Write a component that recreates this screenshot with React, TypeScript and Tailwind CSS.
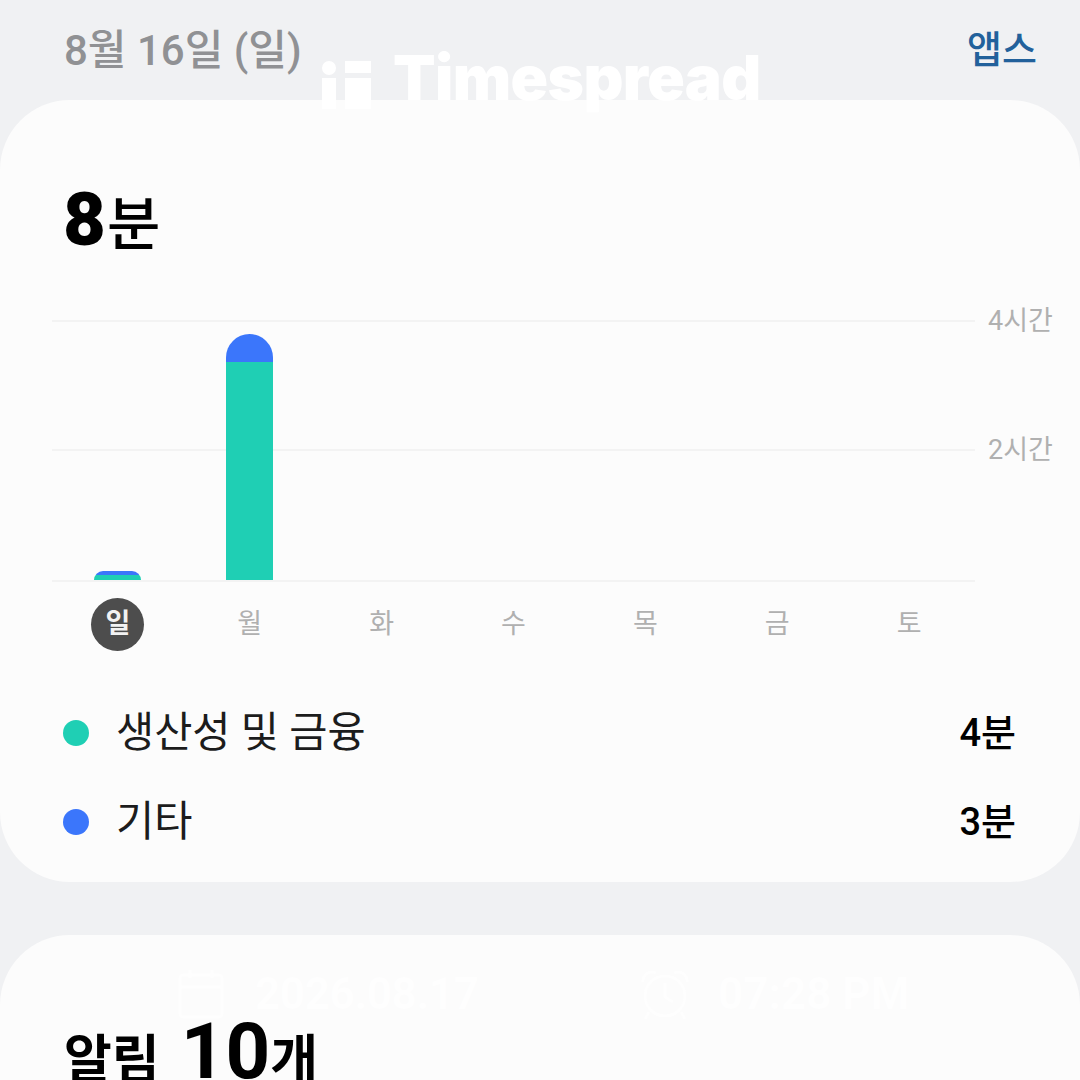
const days = ['일', '월', '화', '수', '목', '금', '토'];

const bars: Record<string, { green: number; blue: number; round: string }> = {
  일: { green: 5, blue: 4, round: 'rounded-t-[10px]' },
  월: { green: 218, blue: 28, round: 'rounded-t-[24px]' },
};

const usage = [
  { name: '생산성 및 금융', time: '4분', dot: 'bg-[#1fcfb4]' },
  { name: '기타', time: '3분', dot: 'bg-[#3b76fb]' },
];

const Watermark = () => (
  <div className="absolute left-[322px] top-[41px] flex items-center gap-[22px] text-white">
    <svg width="49" height="62" viewBox="0 0 49 62" fill="currentColor">
      <circle cx="7" cy="21" r="7" />
      <rect x="0" y="31" width="14" height="31" />
      <rect x="23" y="14" width="26" height="12" />
      <rect x="23" y="31" width="26" height="31" />
    </svg>
    <span className="whitespace-nowrap font-['Inter'] text-[62px] leading-[74px] font-black tracking-[-0.6px]">Timespread</span>
  </div>
);

const Stamp = () => (
  <div className="absolute left-[178px] top-[968px] flex items-center text-white opacity-70">
    <svg width="46" height="50" viewBox="0 0 46 50" fill="none" stroke="currentColor" strokeWidth="3">
      <rect x="2" y="6" width="42" height="42" rx="3" />
      <path d="M2 18h42M12 1v8M34 1v8" />
    </svg>
    <span className="ml-[31px] w-[385px] whitespace-nowrap font-['Roboto'] text-[44px] leading-[50px] font-bold tracking-[-0.4px]">2026.08.17</span>
    <svg width="50" height="52" viewBox="0 0 50 52" fill="none" stroke="currentColor" strokeWidth="3">
      <circle cx="25" cy="28" r="20" />
      <path d="M25 15v14l8 5M3 14a9 9 0 0 1 13-9M47 14a9 9 0 0 0-13-9M9 44l-4 7M41 44l4 7" />
    </svg>
    <span className="ml-[28px] whitespace-nowrap font-['Roboto'] text-[44px] leading-[50px] font-bold">07:28 PM</span>
  </div>
);

export default function App() {
  return (
    <div className="relative h-[1080px] w-[1080px] overflow-hidden bg-[#f0f1f3] font-['Roboto','Noto_Sans_CJK_KR',sans-serif]">
      <header className="flex h-[100px] items-start justify-between pl-[64px] pr-[43px] pt-[24px]">
        <span className="text-[42px] leading-[54px] font-medium text-[#909194]">8월 16일 (일)</span>
        <span className="text-[38px] leading-[52px] font-medium text-[#22619b]">앱스</span>
      </header>

      <section className="h-[782px] rounded-[70px] bg-[#fcfcfc] pt-[84px]">
        <div className="flex items-baseline pl-[63px] leading-[72px] text-black">
          <span className="text-[74px] font-black">8</span>
          <span className="ml-[1px] text-[58px] font-medium">분</span>
        </div>

        <div className="relative ml-[52px] mt-[59px] h-[262px] w-[923px] border-b-2 border-[#f3f3f3]">
          <div className="absolute inset-x-0 top-0 border-t-2 border-[#f3f3f3]" />
          <div className="absolute inset-x-0 top-[129px] border-t-2 border-[#f3f3f3]" />
          <span className="absolute left-[936px] top-[-17px] whitespace-nowrap text-[27px] leading-[36px] text-[#b0b0b0]">4시간</span>
          <span className="absolute left-[936px] top-[112px] whitespace-nowrap text-[27px] leading-[36px] text-[#b0b0b0]">2시간</span>
          <div className="relative grid h-full grid-cols-7 items-end">
            {days.map((d) => (
              <div key={d} className="flex justify-center">
                {bars[d] && (
                  <div className={`w-[47px] overflow-hidden ${bars[d].round}`}>
                    <div className="bg-[#3b76fb]" style={{ height: bars[d].blue }} />
                    <div className="bg-[#1fcfb4]" style={{ height: bars[d].green }} />
                  </div>
                )}
              </div>
            ))}
          </div>
        </div>

        <div className="ml-[52px] mt-[16px] grid w-[923px] grid-cols-7">
          {days.map((d, i) => (
            <div key={d} className="flex justify-center">
              <span
                className={
                  i === 0
                    ? 'flex h-[53px] w-[53px] items-center justify-center rounded-full bg-[#4d4d4d] text-[27px] font-bold text-[#f2f2f2]'
                    : 'flex h-[53px] items-center text-[27px] text-[#b0b0b0]'
                }
              >
                {d}
              </span>
            </div>
          ))}
        </div>

        <ul className="mt-[52px] flex flex-col gap-[29px] pl-[63px] pr-[64px]">
          {usage.map((u) => (
            <li key={u.name} className="flex h-[60px] items-center">
              <span className={`h-[26px] w-[26px] rounded-full ${u.dot}`} />
              <span className="ml-[27px] flex-1 text-[41.5px] leading-[60px] text-[#1c1c1c]">{u.name}</span>
              <span className="text-[38px] leading-[60px] font-medium text-black">{u.time}</span>
            </li>
          ))}
        </ul>
      </section>

      <section className="mt-[53px] h-[300px] rounded-[70px] bg-[#fcfcfc] pl-[64px] pt-[77px]">
        <div className="flex items-baseline leading-[80px] font-bold text-black">
          <span className="text-[52px]">알림</span>
          <span className="ml-[21px] text-[78px]">10</span>
          <span className="text-[52px]">개</span>
        </div>
      </section>

      <Watermark />
      <Stamp />
    </div>
  );
}
